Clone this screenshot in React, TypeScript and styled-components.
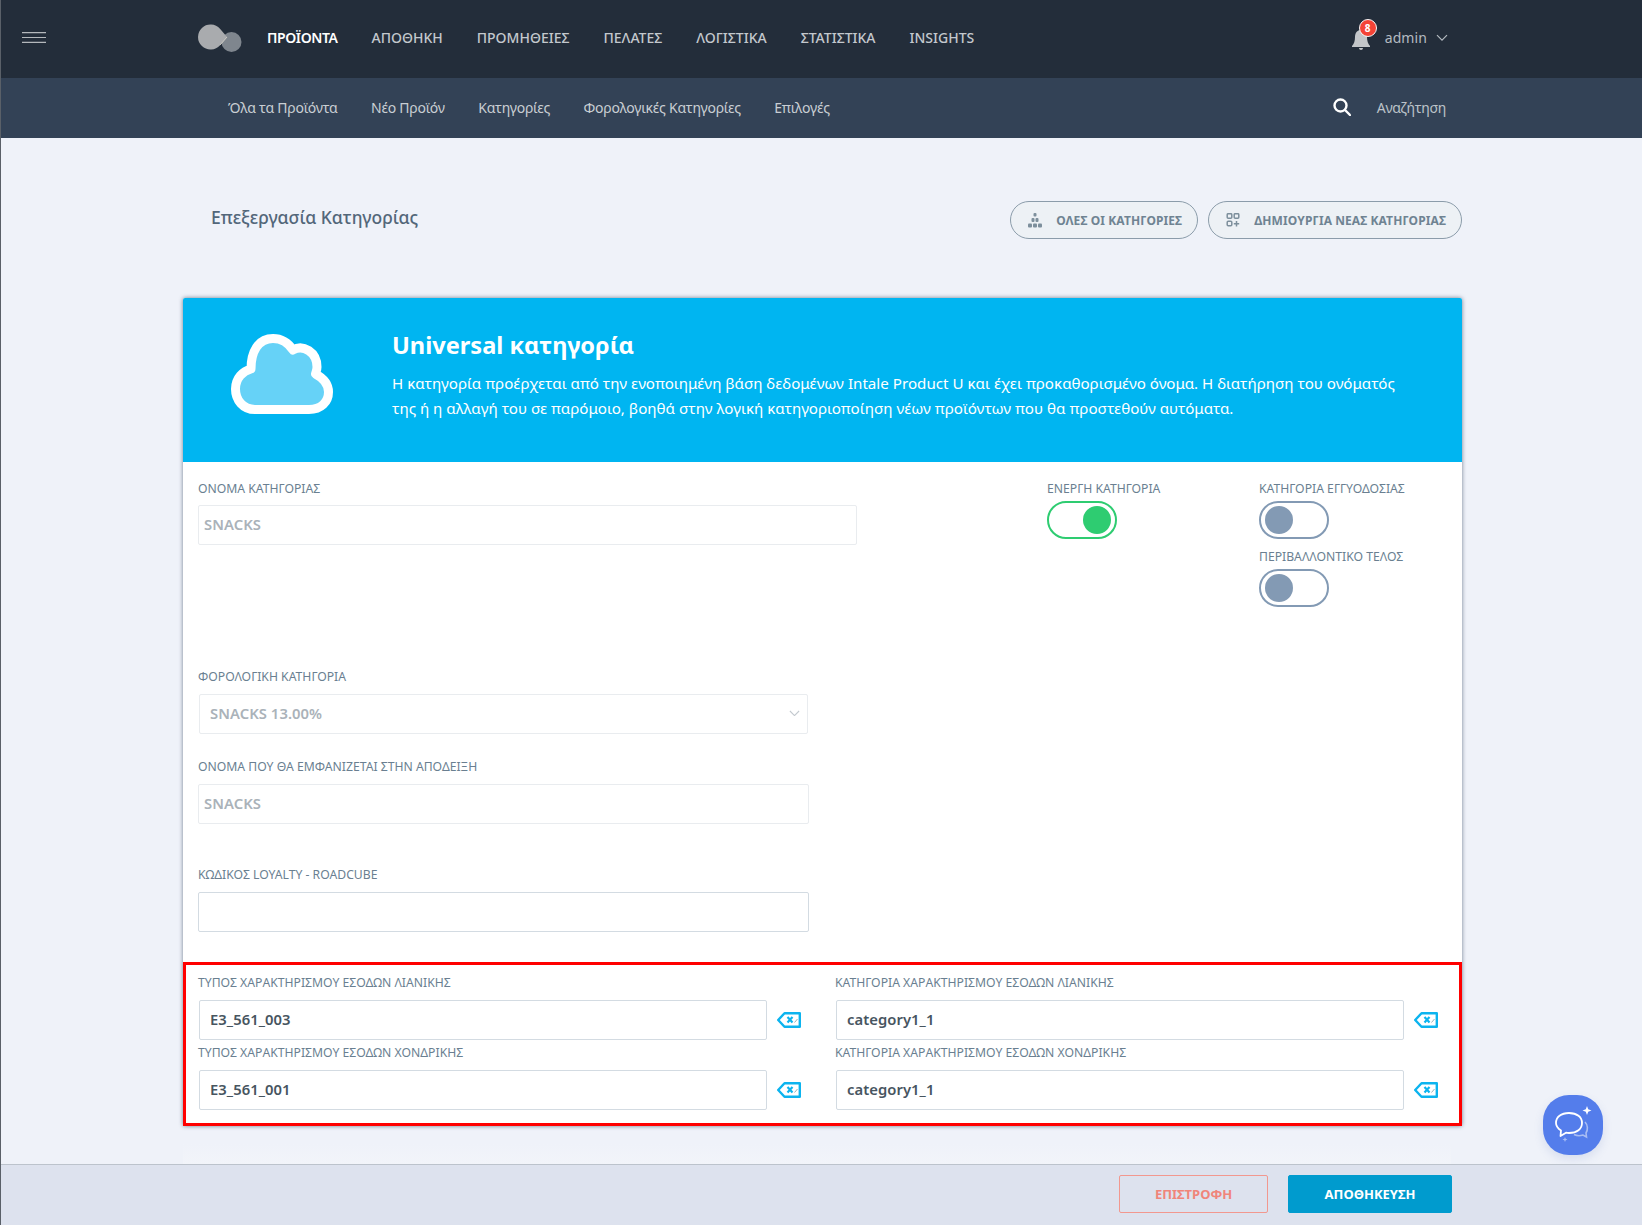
import { ReactNode } from 'react'
import styled, { createGlobalStyle } from 'styled-components'

const GlobalStyle = createGlobalStyle`
  html, body {
    margin: 0;
    padding: 0;
    height: 100%;
    overflow: hidden;
    background: #eff2f9;
    font-family: 'Noto Sans', 'Open Sans', sans-serif;
  }
  * { box-sizing: border-box; }
`

const Page = styled.div`
  height: 1225px;
  overflow: hidden;
  border-left: 1px solid #5a6068;
`

const TopBar = styled.header`
  height: 78px;
  background: #232d3a;
  display: flex;
  align-items: center;
  padding: 0 194px 3px 21px;
`

const LogoWrap = styled.div`
  margin-left: 152px;
  width: 69px;
  height: 36px;
  display: flex;
  align-items: center;
`

const MainNav = styled.nav`
  display: flex;
  gap: 34px;
  flex: 1;
`

const MainLink = styled.a<{ $active?: boolean }>`
  font-size: 14px;
  font-weight: ${(p) => (p.$active ? 600 : 500)};
  letter-spacing: ${(p) => (p.$active ? '-0.4px' : '0')};
  color: ${(p) => (p.$active ? '#ffffff' : '#c3c8cd')};
`

const UserBox = styled.div`
  display: flex;
  align-items: center;
  color: #b4bac1;
  font-size: 14px;
  letter-spacing: 0.1px;
`

const BellWrap = styled.div`
  position: relative;
  top: 2px;
  width: 20px;
  height: 20px;
  margin-right: 14px;
`

const Badge = styled.span`
  position: absolute;
  top: -11px;
  left: 8px;
  width: 18px;
  height: 18px;
  border-radius: 50%;
  background: #f44336;
  border: 1px solid #f7f7f7;
  color: #fff;
  font-size: 10px;
  font-weight: 700;
  display: flex;
  align-items: center;
  justify-content: center;
`

const UserChevron = styled.span`
  display: flex;
  margin-left: 9px;
`

const SubBar = styled.div`
  height: 60px;
  background: #334256;
  display: flex;
  align-items: center;
  padding: 0 196px 2px 227px;
`

const SubNav = styled.nav`
  display: flex;
  gap: 33.5px;
  flex: 1;
`

const SubLink = styled.a`
  font-size: 14px;
  letter-spacing: -0.24px;
  color: #c9ced3;
`

const SearchBox = styled.div`
  display: flex;
  align-items: center;
  gap: 26px;
  font-size: 14px;
  letter-spacing: -0.3px;
  color: #bcc2c9;
`

const Content = styled.main`
  padding: 63px 180px 0 182px;
`

const TitleRow = styled.div`
  display: flex;
  align-items: center;
  justify-content: space-between;
  height: 38px;
  padding-left: 28px;
  margin-bottom: 59px;
`

const Title = styled.h1`
  margin: 0;
  font-size: 17.5px;
  font-weight: 500;
  color: #53677a;
  position: relative;
  top: -3px;
`

const Actions = styled.div`
  display: flex;
  gap: 10px;
`

const PillButton = styled.button`
  height: 38px;
  border: 1px solid #8b9caa;
  border-radius: 19px;
  background: #edf1f5;
  display: flex;
  align-items: center;
  gap: 14px;
  padding: 0 15px 0 17px;
  font-family: inherit;
  font-size: 12px;
  font-weight: 700;
  letter-spacing: 0.1px;
  color: #6f8392;
`

const Card = styled.section`
  width: 1279px;
  background: #fff;
  border-radius: 2px;
  box-shadow: 0 0 4px rgba(60, 75, 100, 0.7);
`

const Hero = styled.div`
  height: 164px;
  background: #00b5f1;
  display: flex;
  padding: 34px 50px 0 48px;
  color: #fff;
  border-radius: 2px 2px 0 0;
`

const HeroIcon = styled.div`
  width: 161px;
  flex: none;
  padding-top: 2px;
`

const HeroTitle = styled.h2`
  margin: 0 0 13px;
  font-size: 23.6px;
  line-height: 26px;
  font-weight: 700;
`

const HeroText = styled.p`
  margin: 0;
  font-size: 15.17px;
  line-height: 25px;
`

const TopSection = styled.div`
  display: flex;
  height: 206px;
  padding: 17px 0 0 15px;
`

const NameColumn = styled.div`
  flex: none;
  width: 659px;
  margin-right: 190px;
`

const Label = styled.label<{ $low?: boolean }>`
  display: block;
  height: 18px;
  line-height: ${(p) => (p.$low ? 20 : 18)}px;
  margin-bottom: 8px;
  font-size: 12.2px;
  color: #6a7f91;
  white-space: nowrap;
`

const Input = styled.div<{ $disabled?: boolean; $indent?: number }>`
  height: 40px;
  width: 100%;
  border: 1px solid ${(p) => (p.$disabled ? '#e9ecef' : '#d3dbe2')};
  border-radius: 2px;
  display: flex;
  align-items: center;
  justify-content: space-between;
  padding: 0 7px 2px ${(p) => p.$indent ?? 10}px;
  font-size: 14.8px;
  font-weight: 600;
  letter-spacing: 0.05px;
  color: ${(p) => (p.$disabled ? '#aab2b9' : '#47555f')};
`

const SelectBox = styled(Input)`
  width: calc(100% - 2px);
  margin-left: 1px;
`

const ToggleColumn = styled.div`
  width: 212px;
  flex: none;
  display: flex;
  flex-direction: column;
`

const ToggleLabel = styled(Label)`
  line-height: 20px;
  margin-bottom: 4px;
`

const Toggle = styled.div<{ $on?: boolean }>`
  width: 70px;
  height: 38px;
  border-radius: 19px;
  border: 2px solid ${(p) => (p.$on ? '#2ecc71' : '#839ab4')};
  display: flex;
  align-items: center;
  justify-content: ${(p) => (p.$on ? 'flex-end' : 'flex-start')};
  padding: 0 4px;
  margin-bottom: 8px;
`

const Knob = styled.span<{ $on?: boolean }>`
  width: 28px;
  height: 28px;
  border-radius: 50%;
  background: ${(p) => (p.$on ? '#2ecc71' : '#839ab4')};
`

const NarrowField = styled.div`
  width: 611px;
  margin-left: 15px;
`

const FieldGap = styled.div<{ $h: number }>`
  height: ${(p) => p.$h}px;
`

const Highlight = styled.div`
  margin-top: 30px;
  height: 164px;
  border: 3px solid #ff0000;
  padding: 9px 0 0 12px;
  display: grid;
  grid-template-columns: 608px 608px;
  column-gap: 29px;
  grid-auto-rows: 70px;
`

const Mapping = styled.div`
  display: flex;
  flex-direction: column;
`

const MappingRow = styled.div`
  display: flex;
  align-items: center;
  gap: 10px;
  padding-left: 1px;
`

const MappingInput = styled(Input)`
  flex: none;
  width: 568px;
  color: #47555f;
`

const ClearIcon = styled.span`
  display: flex;
  flex: none;
  width: 24px;
`

const Below = styled.div`
  width: 1268px;
  height: 60px;
  margin-top: 18px;
  background: linear-gradient(#eff2f9, #f8f9fb);
`

const Footer = styled.footer`
  position: fixed;
  left: 1px;
  right: 0;
  bottom: 0;
  height: 61px;
  background: #dde2ee;
  border-top: 1px solid #bcc3cc;
  display: flex;
  justify-content: flex-end;
  gap: 20px;
  padding: 10px 190px 0 0;
`

const FooterButton = styled.button<{ $primary?: boolean }>`
  height: 38px;
  width: ${(p) => (p.$primary ? 164 : 149)}px;
  border-radius: 2px;
  border: 1px solid ${(p) => (p.$primary ? '#009bce' : '#f2988f')};
  background: ${(p) => (p.$primary ? '#009bce' : 'transparent')};
  color: ${(p) => (p.$primary ? '#fff' : '#f0857a')};
  font-family: inherit;
  font-size: 13px;
  font-weight: 700;
`

const ChatBubble = styled.div`
  position: fixed;
  left: 1543px;
  top: 1095px;
  width: 60px;
  height: 60px;
  border-radius: 26px;
  background: #547deb;
  box-shadow: 0 4px 10px rgba(80, 110, 180, 0.15);
  display: flex;
  align-items: center;
  justify-content: center;
`

function Hamburger() {
  return (
    <svg width="24" height="11" viewBox="0 0 24 11" fill="none" stroke="#b4b8bc" strokeWidth="1.2">
      <path d="M0 .6h24M0 5.500h24M0 10.400h24" />
    </svg>
  )
}

function Logo() {
  return (
    <svg width="46" height="30" viewBox="0 0 46 30">
      <circle cx="33.500" cy="19" r="10" fill="#7f868e" />
      <path d="M22 5.850L29 14l-7 8.150A12.500 12.500 0 1 1 22 5.850z" fill="#a9abae" />
      <path d="M29 14l-7 8.150" stroke="#d9d6cc" strokeWidth="0.8" fill="none" />
    </svg>
  )
}

function Bell() {
  return (
    <svg width="20" height="20" viewBox="0 0 20 20" fill="#c3c6c9">
      <path d="M10 0c4 0 6 3 6 7 0 4 1 7 3 9v1H1v-1c2-2 3-5 3-9 0-4 2-7 6-7z" />
      <path d="M8 18h4c0 1-1 2-2 2s-2-1-2-2z" />
    </svg>
  )
}

function Chevron({ color, size }: { color: string; size: number }) {
  return (
    <svg width={size} height={size * 0.6} viewBox="0 0 12 7" fill="none" stroke={color} strokeWidth="1.2">
      <path d="M1 1l5 5 5-5" />
    </svg>
  )
}

function SearchIcon() {
  return (
    <svg width="18" height="18" viewBox="0 0 18 18" fill="none" stroke="#fff" strokeWidth="2.4">
      <circle cx="7.500" cy="7.500" r="6" />
      <path d="M12 12l5 5" strokeLinecap="round" />
    </svg>
  )
}

function StackIcon() {
  return (
    <svg width="14" height="15" viewBox="0 0 14 15" fill="#7d8f9c">
      <rect x="5.500" y="0" width="3" height="3.500" rx="1" />
      <rect x="3.500" y="5" width="3" height="4" rx="1" />
      <rect x="7.500" y="5" width="3" height="4" rx="1" />
      <rect x="0" y="10.500" width="4" height="4" rx="1" />
      <rect x="5" y="10.500" width="4" height="4" rx="1" />
      <rect x="10" y="10.500" width="4" height="4" rx="1" />
    </svg>
  )
}

function GridPlusIcon() {
  return (
    <svg width="14" height="14" viewBox="0 0 13 14" fill="none" stroke="#7d8f9c" strokeWidth="1.5">
      <rect x="0.700" y="0.700" width="4.600" height="4.600" rx="1" />
      <rect x="7.700" y="0.700" width="4.600" height="4.600" rx="1" />
      <rect x="0.700" y="8.200" width="4.600" height="4.600" rx="1" />
      <path d="M10 8v5.500M7.300 10.700h5.400" />
    </svg>
  )
}

function CloudIcon() {
  return (
    <svg width="102" height="80" viewBox="0 0 102 80">
      <path
        d="M24 75.500C12 75.500 4.500 66 4.500 55c0-11 7.500-18 15.500-20C20 18 27 4.500 42 4.500c10 0 16 5.500 20 11.500 10-6 24 2 24 17 0 3-1 5-1.500 7C92 44 97.500 50 97.500 58c0 10-7.500 17.500-19.500 17.500z"
        fill="#66d2f7"
        stroke="#fff"
        strokeWidth="9"
        strokeLinejoin="round"
      />
    </svg>
  )
}

function ClearField() {
  return (
    <ClearIcon>
      <svg width="24" height="16" viewBox="0 0 24 16" fill="none">
        <path d="M7.500 1.200H22.800v13.600H7.500L1.200 8z" stroke="#0cb4ef" strokeWidth="2.400" strokeLinejoin="round" />
        <path d="M10.500 5l5 5.500M15.500 5l-5 5.500" stroke="#0cb4ef" strokeWidth="2.200" />
        <path d="M17.500 10.500l3-3.500" stroke="#9ab0b8" strokeWidth="1" />
      </svg>
    </ClearIcon>
  )
}

function ChatIcon() {
  return (
    <svg width="44" height="44" viewBox="0 0 44 44" fill="none">
      <path
        d="M18 10c8 0 13 4 13 10s-5 10-13 10c-1 0-2 0-3-.3L9.500 33l.5-5.500C7 25.500 5 23 5 20c0-6 5-10 13-10z"
        stroke="#fff"
        strokeWidth="1.800"
        strokeLinejoin="round"
      />
      <path d="M36 3l1.200 3.300L40.500 7.500l-3.300 1.200L36 12l-1.200-3.300L31.500 7.500l3.300-1.200z" fill="#fff" />
      <path d="M34 19c3 3 3 8 1 11l.5 4-3.500-2c-3 1-6 1-9-.500" stroke="#a9bdf3" strokeWidth="1.600" />
      <path d="M14 34l.7 1.800 1.800.7-1.800.7L14 39l-.7-1.800-1.800-.7 1.800-.7z" fill="#a9bdf3" />
    </svg>
  )
}

function Field({ label, low, children }: { label: string; low?: boolean; children: ReactNode }) {
  return (
    <div>
      <Label $low={low}>{label}</Label>
      {children}
    </div>
  )
}

function MappingField({ label, value }: { label: string; value: string }) {
  return (
    <Mapping>
      <Label>{label}</Label>
      <MappingRow>
        <MappingInput>{value}</MappingInput>
        <ClearField />
      </MappingRow>
    </Mapping>
  )
}

const mainLinks = ['ΑΠΟΘΗΚΗ', 'ΠΡΟΜΗΘΕΙΕΣ', 'ΠΕΛΑΤΕΣ', 'ΛΟΓΙΣΤΙΚΑ', 'ΣΤΑΤΙΣΤΙΚΑ', 'INSIGHTS']
const subLinks = ['Όλα τα Προϊόντα', 'Νέο Προϊόν', 'Κατηγορίες', 'Φορολογικές Κατηγορίες', 'Επιλογές']

export default function App() {
  return (
    <Page>
      <GlobalStyle />
      <TopBar>
        <Hamburger />
        <LogoWrap>
          <Logo />
        </LogoWrap>
        <MainNav>
          <MainLink $active>ΠΡΟΪΟΝΤΑ</MainLink>
          {mainLinks.map((link) => (
            <MainLink key={link}>{link}</MainLink>
          ))}
        </MainNav>
        <UserBox>
          <BellWrap>
            <Bell />
            <Badge>8</Badge>
          </BellWrap>
          admin
          <UserChevron>
            <Chevron color="#b4bac1" size={12} />
          </UserChevron>
        </UserBox>
      </TopBar>
      <SubBar>
        <SubNav>
          {subLinks.map((link) => (
            <SubLink key={link}>{link}</SubLink>
          ))}
        </SubNav>
        <SearchBox>
          <SearchIcon />
          Αναζήτηση
        </SearchBox>
      </SubBar>
      <Content>
        <TitleRow>
          <Title>Επεξεργασία Κατηγορίας</Title>
          <Actions>
            <PillButton>
              <StackIcon />
              ΟΛΕΣ ΟΙ ΚΑΤΗΓΟΡΙΕΣ
            </PillButton>
            <PillButton>
              <GridPlusIcon />
              ΔΗΜΙΟΥΡΓΙΑ ΝΕΑΣ ΚΑΤΗΓΟΡΙΑΣ
            </PillButton>
          </Actions>
        </TitleRow>
        <Card>
          <Hero>
            <HeroIcon>
              <CloudIcon />
            </HeroIcon>
            <div>
              <HeroTitle>Universal κατηγορία</HeroTitle>
              <HeroText>
                Η κατηγορία προέρχεται από την ενοποιημένη βάση δεδομένων Intale Product U και έχει προκαθορισμένο
                όνομα. Η διατήρηση του ονόματός της ή η αλλαγή του σε παρόμοιο, βοηθά στην λογική κατηγοριοποίηση νέων
                προϊόντων που θα προστεθούν αυτόματα.
              </HeroText>
            </div>
          </Hero>
          <TopSection>
            <NameColumn>
              <Field label="ΟΝΟΜΑ ΚΑΤΗΓΟΡΙΑΣ" low>
                <Input $disabled $indent={5}>
                  SNACKS
                </Input>
              </Field>
            </NameColumn>
            <ToggleColumn>
              <ToggleLabel>ΕΝΕΡΓΗ ΚΑΤΗΓΟΡΙΑ</ToggleLabel>
              <Toggle $on>
                <Knob $on />
              </Toggle>
            </ToggleColumn>
            <ToggleColumn>
              <ToggleLabel>ΚΑΤΗΓΟΡΙΑ ΕΓΓΥΟΔΟΣΙΑΣ</ToggleLabel>
              <Toggle>
                <Knob />
              </Toggle>
              <ToggleLabel>ΠΕΡΙΒΑΛΛΟΝΤΙΚΟ ΤΕΛΟΣ</ToggleLabel>
              <Toggle>
                <Knob />
              </Toggle>
            </ToggleColumn>
          </TopSection>
          <NarrowField>
            <Field label="ΦΟΡΟΛΟΓΙΚΗ ΚΑΤΗΓΟΡΙΑ">
              <SelectBox $disabled>
                SNACKS 13.00%
                <Chevron color="#c3c9cf" size={11} />
              </SelectBox>
            </Field>
            <FieldGap $h={24} />
            <Field label="ΟΝΟΜΑ ΠΟΥ ΘΑ ΕΜΦΑΝΙΖΕΤΑΙ ΣΤΗΝ ΑΠΟΔΕΙΞΗ">
              <Input $disabled $indent={5}>
                SNACKS
              </Input>
            </Field>
            <FieldGap $h={42} />
            <Field label="ΚΩΔΙΚΟΣ LOYALTY - ROADCUBE">
              <Input />
            </Field>
          </NarrowField>
          <Highlight>
            <MappingField label="ΤΥΠΟΣ ΧΑΡΑΚΤΗΡΙΣΜΟΥ ΕΣΟΔΩΝ ΛΙΑΝΙΚΗΣ" value="E3_561_003" />
            <MappingField label="ΚΑΤΗΓΟΡΙΑ ΧΑΡΑΚΤΗΡΙΣΜΟΥ ΕΣΟΔΩΝ ΛΙΑΝΙΚΗΣ" value="category1_1" />
            <MappingField label="ΤΥΠΟΣ ΧΑΡΑΚΤΗΡΙΣΜΟΥ ΕΣΟΔΩΝ ΧΟΝΔΡΙΚΗΣ" value="E3_561_001" />
            <MappingField label="ΚΑΤΗΓΟΡΙΑ ΧΑΡΑΚΤΗΡΙΣΜΟΥ ΕΣΟΔΩΝ ΧΟΝΔΡΙΚΗΣ" value="category1_1" />
          </Highlight>
        </Card>
        <Below />
      </Content>
      <ChatBubble>
        <ChatIcon />
      </ChatBubble>
      <Footer>
        <FooterButton>ΕΠΙΣΤΡΟΦΗ</FooterButton>
        <FooterButton $primary>ΑΠΟΘΗΚΕΥΣΗ</FooterButton>
      </Footer>
    </Page>
  )
}
